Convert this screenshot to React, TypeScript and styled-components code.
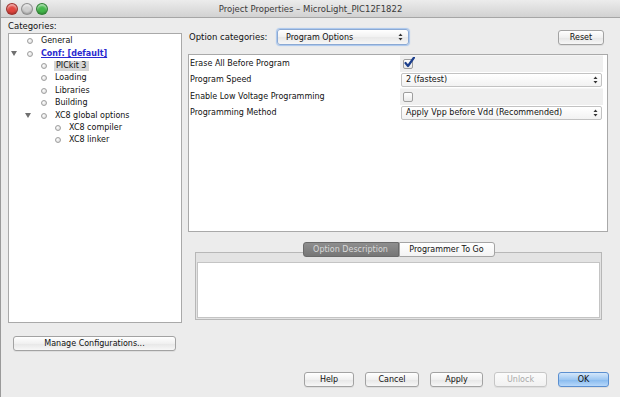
import React from "react";
import styled, { createGlobalStyle } from "styled-components";

const GlobalStyle = createGlobalStyle`
  html, body {
    margin: 0;
    padding: 0;
    background: #ececec;
  }
  body {
    font-family: "DejaVu Sans", "Noto Sans", sans-serif;
  }
`;

interface TreeItem {
  label: string;
  level: number;
  open?: boolean;
  kind?: "link" | "selected";
}

const treeItems: TreeItem[] = [
  { label: "General", level: 0 },
  { label: "Conf: [default]", level: 0, open: true, kind: "link" },
  { label: "PICkit 3", level: 1, kind: "selected" },
  { label: "Loading", level: 1 },
  { label: "Libraries", level: 1 },
  { label: "Building", level: 1 },
  { label: "XC8 global options", level: 1, open: true },
  { label: "XC8 compiler", level: 2 },
  { label: "XC8 linker", level: 2 },
];

const Arrows = () => (
  <svg width="5" height="8" viewBox="0 0 5 8">
    <path d="M2.5 0.5 L4.5 3 L0.5 3 Z" fill="#333" />
    <path d="M2.5 7.5 L4.5 5 L0.5 5 Z" fill="#333" />
  </svg>
);

const CheckMark = () => (
  <svg width="12" height="12" viewBox="0 0 12 12">
    <path
      d="M2.5 6 L5 9 L11 0.5"
      fill="none"
      stroke="#1c3f8c"
      strokeWidth="2.2"
      strokeLinecap="round"
      strokeLinejoin="round"
    />
  </svg>
);

const App: React.FC = () => {
  return (
    <Window>
      <GlobalStyle />
      <TitleBar>
        <Lights>
          <Light color="#e2463f" />
          <Light color="#cfcfcf" />
          <Light color="#43b84a" />
        </Lights>
        <Title>Project Properties – MicroLight_PIC12F1822</Title>
        <span />
      </TitleBar>

      <Main>
        <LeftColumn>
          <SectionLabel>Categories:</SectionLabel>
          <TreePanel>
            {treeItems.map((item) => (
              <TreeRow key={item.label} level={item.level}>
                <ToggleSlot>{item.open && <Triangle />}</ToggleSlot>
                <BulletSlot>
                  <Bullet />
                </BulletSlot>
                <TreeText kind={item.kind}>{item.label}</TreeText>
              </TreeRow>
            ))}
          </TreePanel>
          <WideButton>Manage Configurations...</WideButton>
        </LeftColumn>

        <RightColumn>
          <HeaderRow>
            <HeaderLabel>Option categories:</HeaderLabel>
            <CategorySelect>
              <span>Program Options</span>
              <Arrows />
            </CategorySelect>
            <Button width={46} style={{ marginLeft: "auto" }}>
              Reset
            </Button>
          </HeaderRow>

          <OptionsPanel>
            <OptionsGrid>
              <OptionLabel>Erase All Before Program</OptionLabel>
              <CheckCell>
                <CheckBox>
                  <CheckMarkHolder>
                    <CheckMark />
                  </CheckMarkHolder>
                </CheckBox>
              </CheckCell>

              <OptionLabel>Program Speed</OptionLabel>
              <SelectCell>
                <CellSelect>
                  <span>2 (fastest)</span>
                  <Arrows />
                </CellSelect>
              </SelectCell>

              <OptionLabel>Enable Low Voltage Programming</OptionLabel>
              <CheckCell>
                <CheckBox />
              </CheckCell>

              <OptionLabel>Programming Method</OptionLabel>
              <SelectCell>
                <CellSelect>
                  <span>Apply Vpp before Vdd (Recommended)</span>
                  <Arrows />
                </CellSelect>
              </SelectCell>
            </OptionsGrid>
          </OptionsPanel>

          <TabArea>
            <TabStrip>
              <Tab selected side="left">
                Option Description
              </Tab>
              <Tab side="right">Programmer To Go</Tab>
            </TabStrip>
            <TabBox>
              <TabContent />
            </TabBox>
          </TabArea>
        </RightColumn>
      </Main>

      <ButtonBar>
        <Button width={50}>Help</Button>
        <Button width={54}>Cancel</Button>
        <Button width={53}>Apply</Button>
        <Button width={53} disabled>
          Unlock
        </Button>
        <Button width={51} primary>
          OK
        </Button>
      </ButtonBar>
    </Window>
  );
};

const Window = styled.div`
  width: 620px;
  height: 397px;
  overflow: hidden;
  background: #ececec;
  display: flex;
  flex-direction: column;
  color: #111;
  font-size: 8px;
  box-sizing: border-box;
  border-left: 1px solid #9a9a9a;
`;

const TitleBar = styled.div`
  height: 17px;
  flex-shrink: 0;
  border-bottom: 1px solid #a6a6a6;
  background: linear-gradient(#ececec, #d2d2d2);
  display: grid;
  grid-template-columns: 1fr auto 1fr;
  align-items: center;
`;

const Lights = styled.div`
  display: flex;
  gap: 3px;
  padding-left: 5px;
`;

const Light = styled.div<{ color: string }>`
  width: 10px;
  height: 10px;
  border-radius: 50%;
  background: ${(p) => p.color};
  box-shadow: inset 0 -1px 2px rgba(0, 0, 0, 0.25),
    inset 0 2px 2px rgba(255, 255, 255, 0.55);
  border: 0.5px solid rgba(0, 0, 0, 0.3);
`;

const Title = styled.div`
  font-size: 8.5px;
  color: #3a3a3a;
  white-space: nowrap;
`;

const Main = styled.div`
  display: flex;
  padding-left: 7px;
  gap: 6px;
`;

const LeftColumn = styled.div`
  width: 174px;
  display: flex;
  flex-direction: column;
`;

const SectionLabel = styled.div`
  margin-top: 3px;
  height: 12px;
  line-height: 11px;
  font-size: 8.5px;
`;

const TreePanel = styled.div`
  height: 290px;
  box-sizing: border-box;
  border: 1px solid #a9a9a9;
  background: #fff;
  padding-top: 1px;
`;

const TreeRow = styled.div<{ level: number }>`
  height: 12.4px;
  display: flex;
  align-items: center;
  padding-left: ${(p) => p.level * 14 + 1}px;
`;

const ToggleSlot = styled.div`
  width: 8px;
  display: flex;
  justify-content: center;
  margin-right: 8px;
`;

const Triangle = styled.div`
  width: 0;
  height: 0;
  border-left: 3px solid transparent;
  border-right: 3px solid transparent;
  border-top: 5px solid #707070;
`;

const BulletSlot = styled.div`
  width: 8px;
  display: flex;
  justify-content: center;
  margin-right: 7px;
`;

const Bullet = styled.div`
  width: 4px;
  height: 4px;
  border-radius: 50%;
  border: 1px solid #a0a0a0;
  background: radial-gradient(circle at 40% 40%, #ffffff, #d0d0d0);
`;

const TreeText = styled.span<{ kind?: "link" | "selected" }>`
  white-space: nowrap;
  line-height: 10px;
  color: ${(p) => (p.kind === "link" ? "#2a2ad0" : "#111")};
  font-weight: ${(p) => (p.kind === "link" ? "bold" : "normal")};
  text-decoration: ${(p) => (p.kind === "link" ? "underline" : "none")};
  background: ${(p) => (p.kind === "selected" ? "#d6d6d6" : "transparent")};
  padding: ${(p) => (p.kind === "selected" ? "0 3px 0 2px" : "0")};
  margin-left: ${(p) => (p.kind === "selected" ? "-1px" : "0")};
`;

const Button = styled.button<{ width?: number; primary?: boolean }>`
  width: ${(p) => (p.width ? `${p.width}px` : "auto")};
  height: 15px;
  padding: 0;
  box-sizing: border-box;
  font-family: "DejaVu Sans", sans-serif;
  font-size: 8px;
  line-height: 13px;
  color: ${(p) => (p.disabled ? "#a9a9a9" : "#111")};
  border-radius: 3px;
  border: 1px solid ${(p) => (p.primary ? "#5b8fd0" : p.disabled ? "#c6c6c6" : "#a2a2a2")};
  background: ${(p) =>
    p.primary
      ? "linear-gradient(#d4e7fb, #9fc8f2 50%, #86b9ee 51%, #b7d8fa)"
      : p.disabled
      ? "linear-gradient(#fbfbfb, #f1f1f1)"
      : "linear-gradient(#ffffff, #f0f0f0 50%, #e6e6e6 51%, #f7f7f7)"};
  box-shadow: 0 1px 0 rgba(0, 0, 0, 0.06);
  cursor: default;
`;

const WideButton = styled(Button)`
  margin: 13px 6px 0 5px;
  width: 163px;
`;

const RightColumn = styled.div`
  width: 420px;
  display: flex;
  flex-direction: column;
`;

const HeaderRow = styled.div`
  margin-top: 11px;
  height: 16px;
  display: flex;
  align-items: center;
  padding-right: 4px;
`;

const HeaderLabel = styled.div`
  width: 89px;
  padding-left: 1px;
  box-sizing: border-box;
  font-size: 8.5px;
  white-space: nowrap;
`;

const CategorySelect = styled.div`
  width: 132px;
  height: 16px;
  box-sizing: border-box;
  border: 1px solid #8ba9d4;
  border-radius: 3px;
  box-shadow: 0 0 1px 1px #a8c6ee;
  background: linear-gradient(#ffffff, #f1f1f1 50%, #e8e8e8 51%, #f6f6f6);
  display: flex;
  align-items: center;
  justify-content: space-between;
  padding: 0 5px 0 8px;
`;

const OptionsPanel = styled.div`
  margin-top: 9px;
  height: 178px;
  box-sizing: border-box;
  border: 1px solid #a9a9a9;
  background: #fff;
`;

const OptionsGrid = styled.div`
  display: grid;
  grid-template-columns: 211px 203px;
  grid-auto-rows: 16.5px;
`;

const OptionLabel = styled.div`
  display: flex;
  align-items: center;
  padding-left: 1px;
  white-space: nowrap;
`;

const CheckCell = styled.div`
  display: flex;
  align-items: center;
  padding-left: 3px;
  background: #efefef;
  border-top: 1px solid #f6f6f6;
  box-sizing: border-box;
`;

const CheckBox = styled.div`
  width: 10px;
  height: 10px;
  box-sizing: border-box;
  border: 1px solid #9e9e9e;
  border-radius: 2px;
  background: linear-gradient(#ffffff, #e9e9e9);
  position: relative;
`;

const CheckMarkHolder = styled.div`
  position: absolute;
  left: -1px;
  top: -3px;
`;

const SelectCell = styled.div`
  display: flex;
  align-items: center;
  padding: 0 1px;
`;

const CellSelect = styled.div`
  flex: 1;
  height: 14px;
  box-sizing: border-box;
  border: 1px solid #c2c2c2;
  border-radius: 2px;
  background: linear-gradient(#ffffff, #f2f2f2);
  display: flex;
  align-items: center;
  justify-content: space-between;
  padding: 0 3px 0 4px;
  white-space: nowrap;
`;

const TabArea = styled.div`
  margin-top: 10px;
  padding: 0 6px 0 7px;
  display: flex;
  flex-direction: column;
`;

const TabStrip = styled.div`
  display: flex;
  justify-content: center;
  margin-bottom: -5px;
  position: relative;
  z-index: 1;
`;

const Tab = styled.div<{ selected?: boolean; side: "left" | "right" }>`
  width: 96px;
  height: 15px;
  box-sizing: border-box;
  display: flex;
  align-items: center;
  justify-content: center;
  white-space: nowrap;
  border: 1px solid ${(p) => (p.selected ? "#6a6a6a" : "#a4a4a4")};
  border-radius: ${(p) => (p.side === "left" ? "3px 0 0 3px" : "0 3px 3px 0")};
  background: ${(p) =>
    p.selected
      ? "linear-gradient(#8e8e8e, #767676)"
      : "linear-gradient(#ffffff, #f3f3f3)"};
  color: ${(p) => (p.selected ? "#d9d9d9" : "#111")};
`;

const TabBox = styled.div`
  height: 68px;
  box-sizing: border-box;
  border: 1px solid #b7b7b7;
  background: #e3e3e3;
  padding: 9px 1px 1px 1px;
  display: flex;
`;

const TabContent = styled.div`
  flex: 1;
  background: #fff;
  border: 1px solid #c4c4c4;
`;

const ButtonBar = styled.div`
  margin-top: auto;
  display: flex;
  justify-content: flex-end;
  gap: 11px;
  padding: 0 11px 10px 0;
`;

export default App;
